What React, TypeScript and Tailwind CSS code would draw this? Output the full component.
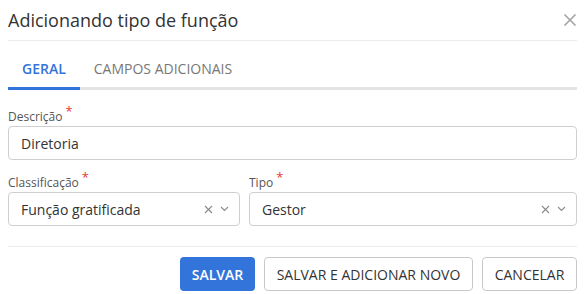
import React from 'react';

const font = { fontFamily: '"Open Sans", "Noto Sans", sans-serif' };

const Required = () => <span className="relative -top-[5px] ml-[3px] text-[13px] text-[#e53935]">*</span>;

const SelectIcons = () => (
  <div className="flex items-center gap-[7px] text-[#8a8a8a]">
    <svg width="9" height="9" viewBox="0 0 9 9" fill="none" stroke="currentColor" strokeWidth="1.1">
      <path d="M1 1l7 7M8 1l-7 7" />
    </svg>
    <svg width="9" height="6" viewBox="0 0 9 6" fill="none" stroke="currentColor" strokeWidth="1.1">
      <path d="M1 1l3.5 3.5L8 1" />
    </svg>
  </div>
);

const SelectField: React.FC<{ label: string; value: string; className?: string }> = ({ label, value, className = '' }) => (
  <div className={`flex flex-col ${className}`}>
    <label className="h-[16px] text-[12px] leading-[16px] text-[#555]">
      {label}
      <Required />
    </label>
    <div className="mt-[2px] flex h-[34px] items-center justify-between rounded-[4px] border border-[#cfcfcf] pl-[12px] pr-[10px]">
      <span className="text-[14px] text-[#333]">{value}</span>
      <SelectIcons />
    </div>
  </div>
);

export default function App() {
  return (
    <div className="h-[294px] w-[585px] bg-white px-[8px]" style={font}>
      <div className="flex h-[41px] items-center justify-between border-b border-[#ededed]">
        <h1 className="text-[18px] text-[#333]">Adicionando tipo de função</h1>
        <svg width="14" height="14" viewBox="0 0 14 14" fill="none" stroke="#a3a3a3" strokeWidth="1.6">
          <path d="M1.5 1.5l11 11M12.5 1.5l-11 11" />
        </svg>
      </div>

      <div className="mt-[9px] flex h-[40px] border-b-[3px] border-[#e3e3e3]">
        <div className="-mb-[3px] flex items-center border-b-[3px] border-[#3374db] px-[14px] text-[14px] font-semibold text-[#3374db]">
          GERAL
        </div>
        <div className="flex items-center px-[14px] text-[14px] text-[#777]">CAMPOS ADICIONAIS</div>
      </div>

      <div className="mt-[18px] flex flex-col">
        <label className="h-[16px] text-[12px] leading-[16px] text-[#555]">
          Descrição
          <Required />
        </label>
        <div className="mt-[2px] flex h-[34px] items-center rounded-[4px] border border-[#cfcfcf] px-[12px] text-[14px] text-[#333]">
          Diretoria
        </div>
      </div>

      <div className="mt-[14px] flex gap-[9px] border-b border-[#ededed] pb-[20px]">
        <SelectField label="Classificação" value="Função gratificada" className="w-[232px]" />
        <SelectField label="Tipo" value="Gestor" className="flex-1" />
      </div>

      <div className="mt-[10px] flex justify-end gap-[9px] text-[14px]">
        <button className="h-[34px] w-[75px] rounded-[4px] bg-[#3374db] font-semibold text-white">SALVAR</button>
        <button className="h-[34px] w-[209px] rounded-[4px] border border-[#c8c8c8] text-[#333]">SALVAR E ADICIONAR NOVO</button>
        <button className="h-[34px] w-[95px] rounded-[4px] border border-[#c8c8c8] text-[#333]">CANCELAR</button>
      </div>
    </div>
  );
}
